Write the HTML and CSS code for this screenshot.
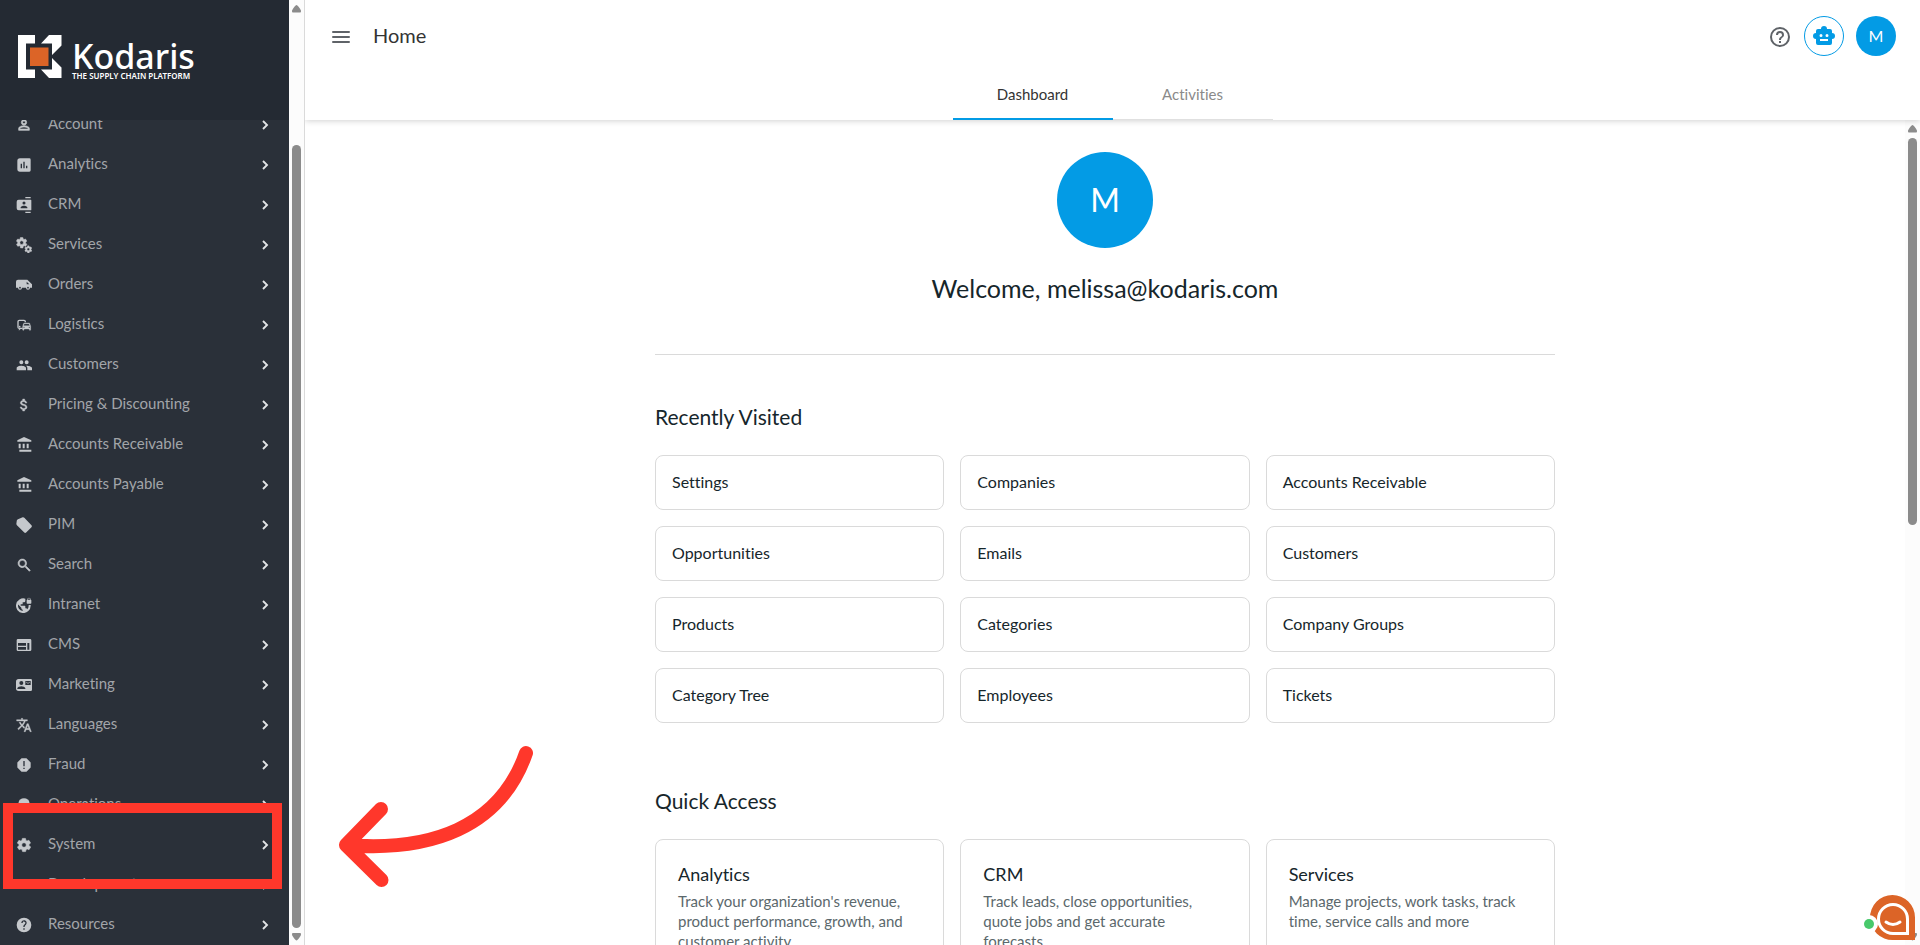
FILE: index.html
```
<!DOCTYPE html>
<html lang="en">
<head>
<meta charset="utf-8">
<title>Home - Kodaris</title>
<link rel="stylesheet" href="styles.css">
</head>
<body>
<svg class="sprite" aria-hidden="true">
  <symbol id="chev" viewBox="0 0 24 24"><path d="M8 17 13 12 8 7 10 5l7 7-7 7z"/></symbol>
  <symbol id="person" viewBox="0 0 24 24"><path d="M12 5.9a2.1 2.1 0 1 1 0 4.2 2.1 2.1 0 0 1 0-4.2m0 9c3 0 6.1 1.5 6.1 2.1v1.1H5.9V17c0-.6 3.1-2.1 6.1-2.1M12 4a4 4 0 1 0 0 8 4 4 0 0 0 0-8zm0 9c-2.7 0-8 1.300-8 4v3h16v-3c0-2.700-5.300-4-8-4z" stroke="#c5c8cc" stroke-width="1"/></symbol>
  <symbol id="chart" viewBox="0 0 24 24"><path fill-rule="evenodd" d="M6 2h14a2 2 0 0 1 2 2v16a2 2 0 0 1-2 2H6a4 4 0 0 1-4-4V6a4 4 0 0 1 4-4zm1 8v7h2v-7zm4-3v10h2V7zm4 6v4h2v-4z"/></symbol>
  <symbol id="contacts" viewBox="0 0 24 24"><path fill-rule="evenodd" d="M22 0h-8v2h8zM14 24h8v-2h-8zM22 4H4a3 3 0 0 0-3 3v10a3 3 0 0 0 3 3h18a1 1 0 0 0 1-1V5a1 1 0 0 0-1-1zm-10 2.700a2.300 2.300 0 1 1 0 4.600 2.300 2.300 0 0 1 0-4.600zM17 17H7v-1.500c0-1.700 3.300-2.500 5-2.500s5 .8 5 2.500z"/></symbol>
  <symbol id="gear" viewBox="0 0 24 24"><path d="M19.4 13a7.500 7.500 0 0 0 0-2l2.100-1.600a.5.5 0 0 0 .1-.6l-2-3.500a.5.5 0 0 0-.6-.2l-2.500 1a7.300 7.300 0 0 0-1.700-1l-.4-2.600a.5.5 0 0 0-.5-.4h-4a.5.5 0 0 0-.5.4L9 5.100c-.6.200-1.200.6-1.700 1l-2.500-1a.5.5 0 0 0-.6.2l-2 3.500c-.1.200-.1.500.1.600L4.600 11a7.500 7.500 0 0 0 0 2l-2.100 1.600a.5.5 0 0 0-.1.600l2 3.500c.1.200.4.300.6.200l2.500-1c.5.4 1.100.7 1.700 1l.4 2.600c0 .2.2.4.5.4h4c.2 0 .5-.2.5-.4l.4-2.600c.6-.3 1.200-.6 1.700-1l2.500 1c.2.1.5 0 .6-.2l2-3.500a.5.5 0 0 0-.1-.6zM12 15.500a3.500 3.500 0 1 1 0-7 3.500 3.500 0 0 1 0 7z" stroke="#c5c8cc" stroke-width="1"/></symbol>
  <symbol id="gears" viewBox="0 0 24 24"><use href="#gear" x="-1" y="-1" width="19" height="19"/><use href="#gear" x="12" y="12" width="13" height="13"/></symbol>
  <symbol id="van" viewBox="0 0 24 24"><path d="M17 4H3a3 3 0 0 0-3 3v9h3a3 3 0 0 0 6 0h6a3 3 0 0 0 6 0h3v-5zM6 17.300a1.300 1.300 0 1 1 0-2.600 1.300 1.300 0 0 1 0 2.600zm12 0a1.300 1.300 0 1 1 0-2.600 1.300 1.300 0 0 1 0 2.600zM16 11V7l4 4z"/></symbol>
  <symbol id="commute" viewBox="0 0 24 24"><path d="M12 4H5C3.300 4 2 5.300 2 7v8c0 1.700 1.300 3 3 3l-1 1v1h1l2-2h3v-2H4V7c0-.6.400-1 1-1h7c.6 0 1 .4 1 1v1h2V7c0-1.700-1.300-3-3-3z"/><circle cx="5.500" cy="14.500" r="1.300"/><path d="M20.600 9.700c-.1-.4-.5-.7-1-.7h-7.200c-.5 0-.8.3-1 .7L10 13.800v5.700c0 .3.200.5.500.5h1c.3 0 .5-.400.500-.7V18h8v1.300c0 .3.200.7.500.7h1c.3 0 .5-.2.500-.5v-5.700zM12.400 10h7.200l1 3h-9.200zM12 16.500a1 1 0 1 1 0-2 1 1 0 0 1 0 2zm8 0a1 1 0 1 1 0-2 1 1 0 0 1 0 2z" stroke="#c5c8cc" stroke-width=".5"/></symbol>
  <symbol id="people" viewBox="0 0 24 24"><path d="M16 11a3 3 0 1 0 0-6 3 3 0 0 0 0 6zm-8 0a3 3 0 1 0 0-6 3 3 0 0 0 0 6zm0 2c-2.300 0-7 1.200-7 3.500V20h14v-3.500C15 14.200 10.300 13 8 13zm8 0h-1c1.200.8 2 2 2 3.500V20h7v-3.500c0-2.300-5.700-3.500-8-3.500z"/></symbol>
  <symbol id="dollar" viewBox="0 0 24 24"><path stroke="#c5c8cc" stroke-width=".6" d="M11.800 10.900c-2.300-.6-3-1.200-3-2.100 0-1.100 1-1.800 2.700-1.800 1.800 0 2.400.9 2.500 2.100h2.200c-.1-1.700-1.100-3.300-3.200-3.800V3h-3v2.200c-1.900.4-3.500 1.600-3.500 3.600 0 2.300 1.900 3.500 4.700 4.100 2.500.6 3 1.500 3 2.400 0 .7-.5 1.800-2.700 1.800-2.100 0-2.900-.9-3-2.100H6.300c.1 2.200 1.800 3.400 3.700 3.800V21h3v-2.200c1.900-.4 3.500-1.500 3.500-3.500 0-2.800-2.400-3.800-4.700-4.400z"/></symbol>
  <symbol id="bank" viewBox="0 0 24 24"><path d="M4 10v7h3v-7zm6 0v7h3v-7zm-5 12h18v-3H5zm11-12v7h3v-7zM12 0 2 5v2h21V5z"/></symbol>
  <symbol id="tag" viewBox="0 0 24 24"><path d="M10 .5 3 3.500a3 3 0 0 0-1.800 1.800L.5 10.500c0 .6.400 1.300.9 1.800l11 11c.8.800 2 .800 2.800 0l8-8c.8-.8.8-2 0-2.800L12.500 1.200a2.500 2.500 0 0 0-2.500-.7z"/></symbol>
  <symbol id="search" viewBox="0 0 24 24"><path stroke="#c5c8cc" stroke-width=".8" d="M15.500 14h-.8l-.3-.3a6.500 6.500 0 1 0-.7.700l.3.300v.8l6 6 1.500-1.500zm-6 0a4.500 4.500 0 1 1 0-9 4.500 4.500 0 0 1 0 9z"/></symbol>
  <symbol id="vpn" viewBox="0 0 24 24"><path d="M22 4v-.5a2.500 2.500 0 0 0-5 0V4c-.6 0-1 .4-1 1v4c0 .6.400 1 1 1h5c.6 0 1-.4 1-1V5c0-.6-.4-1-1-1zm-.8 0h-3.400v-.5a1.700 1.700 0 0 1 3.400 0zm-2.300 8a8.200 8.200 0 0 1-2 6.400c-.3-.8-1-1.400-1.900-1.400h-1v-3c0-.6-.4-1-1-1H7v-2h2c.6 0 1-.4 1-1V8h2a2 2 0 0 0 2-2V2.500A11 11 0 1 0 22 13v-1zM10 20.900A8 8 0 0 1 3.200 11.200L8 16v1a2 2 0 0 0 2 2z"/></symbol>
  <symbol id="web" viewBox="0 0 24 24"><path fill-rule="evenodd" d="M21 3H3a2 2 0 0 0-2 2v14a2 2 0 0 0 2 2h18a2 2 0 0 0 2-2V5a2 2 0 0 0-2-2zm-6 16H3v-4h12zm0-6H3V9h12zm5 6h-3V9h3z"/></symbol>
  <symbol id="mail" viewBox="0 0 24 24"><path fill-rule="evenodd" d="M22 3H4a4 4 0 0 0-4 4v10a4 4 0 0 0 4 4h18a2 2 0 0 0 2-2V5a2 2 0 0 0-2-2zM8 6a3 3 0 1 1 0 6 3 3 0 0 1 0-6zm6 12H2v-1c0-2 4-3.100 6-3.100s6 1.100 6 3.100zm8-6h-8V6h8zm-1-5-3 2-3-2v1l3 2 3-2z"/></symbol>
  <symbol id="translate" viewBox="0 0 24 24"><path d="m12.900 15.100-2.600-2.500c1.800-2 3-4.200 3.800-6.600H17V4h-7V2H8v2H1v2h11.200a15.700 15.700 0 0 1-3.200 5.400A15.700 15.700 0 0 1 6.700 8h-2c.7 1.600 1.700 3.200 3 4.600l-5.100 5L4 19l5-5 3.100 3.100zM18.500 10h-2L12 22h2l1.100-3h4.800l1.100 3h2zm-2.600 7 1.600-4.300 1.600 4.300z" stroke="#c5c8cc" stroke-width=".6"/></symbol>
  <symbol id="error" viewBox="0 0 24 24"><path fill-rule="evenodd" d="M8.300 2h7.400L22 8.300v7.400L15.700 22H8.300L2 15.700V8.300zM11 6v8h2V6zm0 10v2h2v-2z"/></symbol>
  <symbol id="cloud" viewBox="0 0 24 24"><path d="M4 8a8 6 0 0 1 16 0v12H4z"/></symbol>
  <symbol id="code" viewBox="0 0 24 24"><path d="M9.400 16.600 4.800 12l4.600-4.600L8 6l-6 6 6 6zm5.200 0 4.600-4.600-4.600-4.600L16 6l6 6-6 6z"/></symbol>
  <symbol id="help" viewBox="0 0 24 24"><path d="M12 1a11 11 0 1 0 0 22 11 11 0 0 0 0-22zm1 18h-2v-2h2zm2.100-7.700-.9.900C13.400 12.900 13 13.500 13 15h-2v-.5c0-1.100.4-2.100 1.200-2.800l1.200-1.300A2 2 0 1 0 10 9H8a4 4 0 1 1 7.100 2.300z"/></symbol>
</svg>

<div class="app">
  <aside class="sidebar">
    <div class="brand">
      <svg class="mark" width="44" height="44" viewBox="18 35 44 44" role="img" aria-label="Kodaris logo"><path fill="#fff" d="M18 35h17v8.500h-9v26h9V78H18zM49 35h12.500v10.500L52 55V43.500H41zM52 58l9.500 9.500V78H49l-8-8.500h11z"/><path fill="#dc6427" d="M30 47.500h18.500V66H30z"/></svg>
      <div class="wordmark"><div class="name">Kodaris</div><div class="tagline">THE SUPPLY CHAIN PLATFORM</div></div>
    </div>
    <nav class="nav">
      <a href="#"><svg><use href="#person"/></svg><span>Account</span><svg class="chev"><use href="#chev"/></svg></a>
      <a href="#"><svg><use href="#chart"/></svg><span>Analytics</span><svg class="chev"><use href="#chev"/></svg></a>
      <a href="#"><svg><use href="#contacts"/></svg><span>CRM</span><svg class="chev"><use href="#chev"/></svg></a>
      <a href="#"><svg><use href="#gears"/></svg><span>Services</span><svg class="chev"><use href="#chev"/></svg></a>
      <a href="#"><svg><use href="#van"/></svg><span>Orders</span><svg class="chev"><use href="#chev"/></svg></a>
      <a href="#"><svg><use href="#commute"/></svg><span>Logistics</span><svg class="chev"><use href="#chev"/></svg></a>
      <a href="#"><svg><use href="#people"/></svg><span>Customers</span><svg class="chev"><use href="#chev"/></svg></a>
      <a href="#"><svg><use href="#dollar"/></svg><span>Pricing &amp; Discounting</span><svg class="chev"><use href="#chev"/></svg></a>
      <a href="#"><svg><use href="#bank"/></svg><span>Accounts Receivable</span><svg class="chev"><use href="#chev"/></svg></a>
      <a href="#"><svg><use href="#bank"/></svg><span>Accounts Payable</span><svg class="chev"><use href="#chev"/></svg></a>
      <a href="#"><svg><use href="#tag"/></svg><span>PIM</span><svg class="chev"><use href="#chev"/></svg></a>
      <a href="#"><svg><use href="#search"/></svg><span>Search</span><svg class="chev"><use href="#chev"/></svg></a>
      <a href="#"><svg><use href="#vpn"/></svg><span>Intranet</span><svg class="chev"><use href="#chev"/></svg></a>
      <a href="#"><svg><use href="#web"/></svg><span>CMS</span><svg class="chev"><use href="#chev"/></svg></a>
      <a href="#"><svg><use href="#mail"/></svg><span>Marketing</span><svg class="chev"><use href="#chev"/></svg></a>
      <a href="#"><svg><use href="#translate"/></svg><span>Languages</span><svg class="chev"><use href="#chev"/></svg></a>
      <a href="#"><svg><use href="#error"/></svg><span>Fraud</span><svg class="chev"><use href="#chev"/></svg></a>
      <a href="#"><svg><use href="#cloud"/></svg><span>Operations</span><svg class="chev"><use href="#chev"/></svg></a>
      <a href="#"><svg><use href="#gear"/></svg><span>System</span><svg class="chev"><use href="#chev"/></svg></a>
      <a href="#"><svg><use href="#code"/></svg><span>Development</span><svg class="chev"><use href="#chev"/></svg></a>
      <a href="#"><svg><use href="#help"/></svg><span>Resources</span><svg class="chev"><use href="#chev"/></svg></a>
    </nav>
    <div class="highlight"></div>
  </aside>
  <div class="scroll scroll-side"><svg width="9" height="8" viewBox="0 0 9 8"><path d="M4.500 0c1 0 4.500 4.500 4.500 6s-.5 1.500-1 1.500H1C.5 7.500 0 7.500 0 6S3.500 0 4.500 0z"/></svg><div class="track"><div class="thumb"></div></div><svg width="9" height="8" viewBox="0 0 9 8"><path d="M4.500 7.500C3.500 7.500 0 3 0 1.500S.5 0 1 0h7c.5 0 1 0 1 1.500s-3.500 6-4.500 6z"/></svg></div>

  <div class="main">
    <header class="header">
      <div class="bar">
        <button class="icon-btn" aria-label="Menu"><svg width="24" height="24" viewBox="0 0 24 24" fill="none" stroke="#5f6368" stroke-width="2" stroke-linecap="round"><path d="M4 8h16M4 13h16M4 18h16"/></svg></button>
        <h1>Home</h1>
        <button class="icon-btn push" aria-label="Help"><svg width="24" height="24" viewBox="0 0 24 24" fill="#5f6368"><path d="M11 19h2v-2h-2zm1-16a10 10 0 1 0 0 20 10 10 0 0 0 0-20zm0 18a8 8 0 1 1 0-16 8 8 0 0 1 0 16zm0-14a4 4 0 0 0-4 4h2a2 2 0 1 1 4 0c0 2-3 1.700-3 5h2c0-2.300 3-2.500 3-5a4 4 0 0 0-4-4z"/></svg></button>
        <button class="round bot" aria-label="Assistant"><svg width="24" height="24" viewBox="0 0 24 24" fill="#039be5"><path d="M20 9V7a2 2 0 0 0-2-2h-3a3 3 0 0 0-6 0H6a2 2 0 0 0-2 2v2a3 3 0 0 0 0 6v4a2 2 0 0 0 2 2h12a2 2 0 0 0 2-2v-4a3 3 0 0 0 0-6zM7.500 11.500a1.500 1.500 0 1 1 3 0 1.500 1.500 0 0 1-3 0zM16 17H8v-2h8zm-1-4a1.500 1.500 0 1 1 0-3 1.500 1.500 0 0 1 0 3z"/></svg></button>
        <button class="round user" aria-label="Profile">M</button>
      </div>
      <div class="tabs" role="tablist"><button role="tab" class="tab active" aria-selected="true">Dashboard</button><button role="tab" class="tab" aria-selected="false">Activities</button></div>
    </header>
    <div class="body">
      <main class="content">
        <div class="inner">
          <div class="avatar">M</div>
          <p class="welcome">Welcome, melissa@kodaris.com</p>
          <hr>
          <h2>Recently Visited</h2>
          <div class="grid">
            <a class="card" href="#">Settings</a><a class="card" href="#">Companies</a><a class="card" href="#">Accounts Receivable</a>
            <a class="card" href="#">Opportunities</a><a class="card" href="#">Emails</a><a class="card" href="#">Customers</a>
            <a class="card" href="#">Products</a><a class="card" href="#">Categories</a><a class="card" href="#">Company Groups</a>
            <a class="card" href="#">Category Tree</a><a class="card" href="#">Employees</a><a class="card" href="#">Tickets</a>
          </div>
          <h2 class="second">Quick Access</h2>
          <div class="grid">
            <a class="card quick" href="#"><strong>Analytics</strong><span>Track your organization's revenue, product performance, growth, and customer activity</span></a>
            <a class="card quick" href="#"><strong>CRM</strong><span>Track leads, close opportunities, quote jobs and get accurate forecasts</span></a>
            <a class="card quick" href="#"><strong>Services</strong><span>Manage projects, work tasks, track time, service calls and more</span></a>
          </div>
        </div>
      </main>
      <div class="scroll scroll-main"><svg width="9" height="8" viewBox="0 0 9 8"><path d="M4.500 0c1 0 4.500 4.500 4.500 6s-.5 1.500-1 1.500H1C.5 7.500 0 7.500 0 6S3.500 0 4.500 0z"/></svg><div class="track"><div class="thumb"></div></div><svg width="9" height="8" viewBox="0 0 9 8"><path d="M4.500 7.500C3.500 7.500 0 3 0 1.500S.5 0 1 0h7c.5 0 1 0 1 1.500s-3.500 6-4.500 6z"/></svg></div>
    </div>
  </div>
</div>
<svg class="arrow" width="200" height="150" viewBox="335 740 200 150" fill="none" stroke="#ff372b" stroke-width="14" stroke-linecap="round" stroke-linejoin="round" aria-hidden="true"><path d="M346 845C430 852 500 828 526 753M381 809l-35 36 35.500 35"/></svg>
<button class="chat" aria-label="Chat"><svg width="56" height="50" viewBox="0 0 56 50"><path fill="#dc6427" d="M53 48H31a22.500 22.500 0 1 1 22-22.500z"/><path fill="none" stroke="#fff" stroke-width="3" d="M45.500 41.500H31A14.500 14.500 0 1 1 45.500 27z"/><path fill="none" stroke="#fff" stroke-width="3" stroke-linecap="round" d="M24 30q7 5 14 0"/><circle cx="7" cy="32" r="9" fill="#fff"/><circle cx="7" cy="32" r="5" fill="#48c96b"/></svg></button>
</body>
</html>
```
FILE: styles.css
```
* { box-sizing: border-box; }
body {
  margin: 0;
  font-family: Lato, "Open Sans", sans-serif;
  font-size: 15px;
  font-variant-ligatures: none;
  color: #16262b;
  background: #fff;
}
h1, h2, p { margin: 0; font-weight: 400; }
a { color: inherit; text-decoration: none; }
button { font: inherit; border: 0; padding: 0; background: none; cursor: pointer; }
.sprite { position: absolute; width: 0; height: 0; }

.app { display: flex; height: 100vh; overflow: hidden; }

.sidebar {
  position: relative;
  flex: 0 0 289px;
  display: flex;
  flex-direction: column;
  background: #2a3039;
}
.brand {
  flex: 0 0 120px;
  display: flex;
  align-items: flex-start;
  gap: 10px;
  padding: 35px 18px 0;
  background: #242a33;
  color: #fff;
  font-family: "Noto Sans", sans-serif;
}
.mark { flex: none; }
.wordmark { padding-top: 5px; }
.name { font-size: 34px; line-height: 32px; font-weight: 500; }
.tagline { font-size: 8px; line-height: 8px; font-weight: 600; white-space: nowrap; }

.nav {
  flex: 1;
  min-height: 0;
  display: flex;
  flex-direction: column;
  justify-content: flex-end;
  overflow: hidden;
  padding-bottom: 1px;
}
.nav a {
  flex: 0 0 40px;
  display: flex;
  align-items: center;
  padding: 0 16px;
  color: #a2a5a9;
}
.nav svg { width: 16px; height: 16px; margin-top: 2px; fill: #c5c8cc; }
.nav span { flex: 1; margin-left: 16px; padding-bottom: 2px; }
.nav .chev { fill: #e2e4e6; }

.highlight {
  position: absolute;
  left: 3px;
  right: 7px;
  bottom: 56px;
  height: 86px;
  border: 10px solid #ff372b;
}

.scroll {
  flex: 0 0 15px;
  display: flex;
  flex-direction: column;
  align-items: center;
  gap: 5px;
  padding: 5px 3px 4px;
  background: #fcfcfc;
  fill: #8b8b8b;
}
.scroll svg { flex: none; }
.track { flex: 1; width: 9px; display: flex; flex-direction: column; }
.thumb { border-radius: 5px; background: #8b8b8b; }
.scroll-side { flex-basis: 16px; border-right: 1px solid #dadada; }
.scroll-side .track { justify-content: flex-end; }
.scroll-side .thumb { height: 86%; }
.scroll-main .thumb { height: 49%; }

.main { flex: 1; min-width: 0; display: flex; flex-direction: column; }
.header {
  position: relative;
  flex: 0 0 120px;
  background: #fff;
  box-shadow: 0 1px 6px rgba(0, 0, 0, 0.18);
  clip-path: inset(0 0 -8px 0);
}
.bar { display: flex; align-items: center; height: 72px; padding: 0 24px; }
.icon-btn { display: flex; }
h1 { margin-left: 20px; padding-bottom: 2px; font-size: 20px; color: #333; }
.push { margin-left: auto; }
.round {
  display: flex;
  align-items: center;
  justify-content: center;
  width: 40px;
  height: 40px;
  margin-left: 12px;
  border-radius: 50%;
}
.bot { border: 1px solid #039be5; }
.user { padding-bottom: 2px; background: #039be5; color: #fff; font-size: 16px; }
.tabs { display: flex; justify-content: center; height: 48px; }
.tab { width: 160px; padding-bottom: 3px; color: #8a8a8a; border-bottom: 1px solid #e0e0e0; }
.active { padding-bottom: 2px; color: #333; border-bottom: 2px solid #039be5; }

.body { flex: 1; min-height: 0; display: flex; }
.content { flex: 1; overflow: hidden; padding: 32px 24px 0; }
.inner { max-width: 900px; margin: 0 auto; }
.avatar {
  width: 96px;
  height: 96px;
  margin: 0 auto;
  border-radius: 50%;
  background: #039be5;
  color: #fff;
  font-size: 32px;
  line-height: 96px;
  text-align: center;
}
.welcome { margin-top: 24px; font-size: 25px; line-height: 32px; text-align: center; }
hr { margin: 50px 0 0; border: 0; border-top: 1px solid #dadada; }
h2 { margin: 49px 0 26px; font-size: 21px; line-height: 25px; }
.second { margin-top: 65px; }
.grid { display: grid; grid-template-columns: repeat(3, 1fr); gap: 16px; }
.card {
  padding: 15px 16px 17px;
  border: 1px solid #dadada;
  border-radius: 8px;
  font-size: 16px;
  line-height: 21px;
}
.quick { padding: 22px 22px 24px; }
.quick strong { display: block; margin-bottom: 4px; font-size: 18px; line-height: 25px; font-weight: 400; }
.quick span { display: block; font-size: 15px; line-height: 20px; color: #5b686c; }

.arrow { position: absolute; left: 335px; bottom: 55px; }
.chat { position: fixed; right: 2px; bottom: 3px; display: flex; }
```
